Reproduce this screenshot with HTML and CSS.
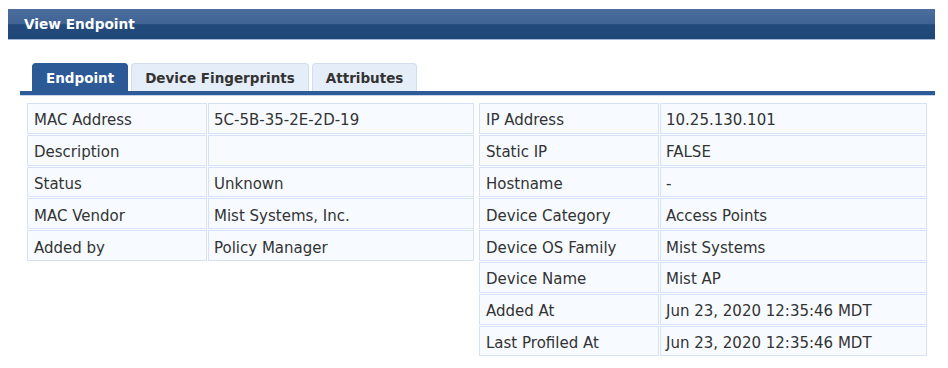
FILE: index.html
```html
<!DOCTYPE html>
<html lang="en">
<head>
    <meta charset="UTF-8">
    <meta name="viewport" content="width=device-width, initial-scale=1.0">
    <title>View Endpoint</title>
    <link rel="stylesheet" href="styles.css">
</head>
<body>
    <div class="panel-title">View Endpoint</div>
    <div class="panel-body">
        <div class="tabs">
            <div class="tab active">Endpoint</div>
            <div class="tab">Device Fingerprints</div>
            <div class="tab">Attributes</div>
        </div>
        <div class="tab-line"></div>
        <div class="details">
            <table class="kv kv-left">
                <tr><td class="k">MAC Address</td><td class="v">5C-5B-35-2E-2D-19</td></tr>
                <tr><td class="k">Description</td><td class="v"></td></tr>
                <tr><td class="k">Status</td><td class="v">Unknown</td></tr>
                <tr><td class="k">MAC Vendor</td><td class="v">Mist Systems, Inc.</td></tr>
                <tr><td class="k">Added by</td><td class="v">Policy Manager</td></tr>
            </table>
            <table class="kv kv-right">
                <tr><td class="k">IP Address</td><td class="v">10.25.130.101</td></tr>
                <tr><td class="k">Static IP</td><td class="v">FALSE</td></tr>
                <tr><td class="k">Hostname</td><td class="v">-</td></tr>
                <tr><td class="k">Device Category</td><td class="v">Access Points</td></tr>
                <tr><td class="k">Device OS Family</td><td class="v">Mist Systems</td></tr>
                <tr><td class="k">Device Name</td><td class="v">Mist AP</td></tr>
                <tr><td class="k">Added At</td><td class="v">Jun 23, 2020 12:35:46 MDT</td></tr>
                <tr><td class="k">Last Profiled At</td><td class="v">Jun 23, 2020 12:35:46 MDT</td></tr>
            </table>
        </div>
    </div>
</body>
</html>
```

FILE: styles.css
```css
body {
    margin: 0;
    padding: 9px 13px 0 8px;
    background: #ffffff;
    font-family: 'DejaVu Sans', Verdana, sans-serif;
    color: #333333;
}

.panel-title {
    height: 30px;
    line-height: 31px;
    padding-left: 16px;
    background: linear-gradient(#4b6e9d 0%, #3f6394 50%, #234b7b 52%, #1e4777 100%);
    border-bottom: 1px solid #a3b8da;
    color: #ffffff;
    font-weight: bold;
    font-size: 13.7px;
}

.panel-body {
    margin: 23px 0 0 12px;
}

.tabs {
    display: flex;
    gap: 3px;
    padding-left: 12px;
}

.tab {
    height: 27px;
    line-height: 28px;
    padding: 0 13px;
    background: #e5edf8;
    border: 1px solid #d3deef;
    border-bottom: none;
    border-radius: 4px 4px 0 0;
    font-weight: bold;
    font-size: 13.5px;
    color: #333333;
}

.tab.active {
    background: #2b5a96;
    border-color: #2b5a96;
    color: #ffffff;
}

.tab-line {
    height: 4px;
    background: #2c5b97;
    border-bottom: 1px solid #c6d5ed;
}

.details {
    display: flex;
    align-items: flex-start;
    gap: 3px;
    padding: 6px 7px 0 6px;
}

.kv {
    border-collapse: separate;
    border-spacing: 1px;
    font-size: 15px;
}

.kv-left {
    width: 449px;
}

.kv-right {
    width: 450px;
}

.kv td {
    box-sizing: border-box;
    height: 30.8px;
    padding: 4px 6px 0 6px;
    background: #f7fbff;
    border: 1px solid #d5e1f6;
    white-space: nowrap;
}

.kv td.k {
    width: 180px;
}

.kv td.v {
    padding-left: 5px;
}
```
